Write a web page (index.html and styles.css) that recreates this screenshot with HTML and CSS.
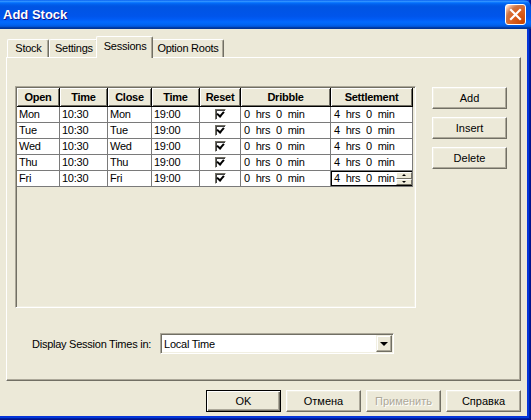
FILE: index.html
```html
<!DOCTYPE html>
<html lang="en">
<head>
    <meta charset="UTF-8">
    <title>Add Stock</title>
    <link rel="stylesheet" href="styles.css">
</head>
<body>
    <div class="window">
        <div class="titlebar">
            <span class="title">Add Stock</span>
            <button class="close-btn" aria-label="Close">
                <svg width="13" height="13" viewBox="0 0 13 13"><path d="M2 2 L11 11 M11 2 L2 11" stroke="#fff" stroke-width="2.2" stroke-linecap="square"/></svg>
            </button>
        </div>
        <div class="client">
            <div class="tabs">
                <div class="tab">Stock</div>
                <div class="tab">Settings</div>
                <div class="tab active">Sessions</div>
                <div class="tab">Option Roots</div>
            </div>
            <div class="panel">
                <div class="grid-area">
                    <div class="grid-frame">
                        <table class="grid">
                            <colgroup>
                                <col class="c-open"><col class="c-time"><col class="c-close"><col class="c-time">
                                <col class="c-reset"><col class="c-dribble"><col class="c-settle">
                            </colgroup>
                            <thead>
                                <tr><th>Open</th><th>Time</th><th>Close</th><th>Time</th><th>Reset</th><th>Dribble</th><th>Settlement</th></tr>
                            </thead>
                            <tbody>
                                <tr><td>Mon</td><td>10:30</td><td>Mon</td><td>19:00</td><td class="reset"><span class="check"></span></td><td class="dur">0 hrs 0 min</td><td class="dur">4 hrs 0 min</td></tr>
                                <tr><td>Tue</td><td>10:30</td><td>Tue</td><td>19:00</td><td class="reset"><span class="check"></span></td><td class="dur">0 hrs 0 min</td><td class="dur">4 hrs 0 min</td></tr>
                                <tr><td>Wed</td><td>10:30</td><td>Wed</td><td>19:00</td><td class="reset"><span class="check"></span></td><td class="dur">0 hrs 0 min</td><td class="dur">4 hrs 0 min</td></tr>
                                <tr><td>Thu</td><td>10:30</td><td>Thu</td><td>19:00</td><td class="reset"><span class="check"></span></td><td class="dur">0 hrs 0 min</td><td class="dur">4 hrs 0 min</td></tr>
                                <tr><td>Fri</td><td>10:30</td><td>Fri</td><td>19:00</td><td class="reset"><span class="check"></span></td><td class="dur">0 hrs 0 min</td>
                                    <td class="dur editing">
                                        <div class="edit">
                                            <span class="edit-text">4 hrs 0 min</span>
                                            <span class="spin"><span class="spin-up"></span><span class="spin-down"></span></span>
                                        </div>
                                    </td></tr>
                            </tbody>
                        </table>
                    </div>
                    <div class="side-buttons">
                        <button class="btn">Add</button>
                        <button class="btn">Insert</button>
                        <button class="btn">Delete</button>
                    </div>
                </div>
                <div class="display-row">
                    <label>Display Session Times in:</label>
                    <div class="combo">
                        <span class="combo-text">Local Time</span>
                        <span class="combo-btn"></span>
                    </div>
                </div>
            </div>
            <div class="dialog-buttons">
                <button class="btn default">OK</button>
                <button class="btn">Отмена</button>
                <button class="btn" disabled>Применить</button>
                <button class="btn">Справка</button>
            </div>
        </div>
    </div>
</body>
</html>
```

FILE: styles.css
```css
body {
    margin: 0;
    background: #fff;
    font-family: "Liberation Sans", Arial, sans-serif;
    font-size: 11px;
    letter-spacing: -0.25px;
    color: #000;
}
.window {
    width: 531px;
    height: 420px;
    display: flex;
    flex-direction: column;
    background: #0831d9;
    box-shadow: inset -1px -1px #00138c, inset -2px -2px #001ea0, inset -3px -3px #003bda;
}

/* title bar */
.titlebar {
    flex: none;
    height: 29px;
    display: flex;
    align-items: center;
    justify-content: space-between;
    padding: 0 5px 0 3px;
    border-top-right-radius: 7px;
    background: linear-gradient(to bottom, #0058ee 0%, #3593ff 4%, #288eff 6%, #127dff 8%, #036ffc 10%, #0262ee 14%, #0057e5 20%, #0054e3 24%, #0055eb 56%, #005bf5 66%, #026afe 76%, #0062ef 86%, #0052d6 92%, #0040ab 94%, #003092 100%);
}
.title {
    color: #fff;
    font-weight: bold;
    font-size: 13px;
    letter-spacing: 0;
    text-shadow: 1px 1px #0f1089;
}
.close-btn {
    width: 21px;
    height: 21px;
    padding: 0;
    display: flex;
    align-items: center;
    justify-content: center;
    border: 1px solid #fff;
    border-radius: 3px;
    background: radial-gradient(circle at 90% 90%, #cc4600 0%, #dc6527 55%, #cd7546 70%, #ffccb2 90%, #fff 100%);
}

/* dialog body */
.client {
    flex: 1;
    margin: 0 4px 4px 0;
    padding: 7px 6px 0 6px;
    background: #ece9d8;
    display: flex;
    flex-direction: column;
}
.tabs {
    display: flex;
    height: 21px;
    padding-left: 1px;
}
.tab {
    box-sizing: border-box;
    min-width: 42px;
    margin-top: 3px;
    height: 18px;
    line-height: 17px;
    padding: 0 4px 0 5px;
    text-align: center;
    border: 1px solid #fff;
    border-right-color: #716f64;
    border-bottom: none;
    border-radius: 2px 2px 0 0;
    box-shadow: inset -1px 0 #aca899;
}
.tab.active {
    position: relative;
    z-index: 1;
    margin: 0 -2px;
    height: 22px;
    line-height: 19px;
    padding: 0 6px 0 7px;
    background: #ece9d8;
}
.panel {
    box-sizing: border-box;
    height: 324px;
    border: 1px solid;
    border-color: #fff #716f64 #716f64 #fff;
    box-shadow: inset -1px -1px #aca899;
    padding: 28px 0 0 8px;
}
.grid-area {
    display: flex;
    align-items: flex-start;
    gap: 16px;
}
.grid-frame {
    box-sizing: border-box;
    width: 401px;
    height: 222px;
    padding: 1px;
    border: 1px solid;
    border-color: #aca899 #fff #fff #aca899;
    box-shadow: inset 1px 1px #716f64, inset -1px -1px #f1efe2;
}

/* sessions grid */
.grid {
    border-collapse: separate;
    border-spacing: 0;
    table-layout: fixed;
    width: 396px;
}
.c-open { width: 43px; }
.c-time { width: 48px; }
.c-close { width: 44px; }
.c-reset { width: 41px; }
.c-dribble { width: 90px; }
.c-settle { width: 82px; }
.grid th {
    padding: 0;
    line-height: 18px;
    font-weight: bold;
    text-align: center;
    background: #ece9d8;
    border-right: 1px solid #000;
    border-bottom: 1px solid #000;
    box-shadow: inset 1px 1px #fff, inset -1px -1px #716f64;
}
.grid td {
    padding: 0 2px;
    line-height: 15px;
    background: #fff;
    border-right: 1px solid #7a7a7a;
    border-bottom: 1px solid #7a7a7a;
    white-space: nowrap;
    overflow: hidden;
}
.grid td.reset {
    text-align: center;
}
.grid td.dur {
    padding-left: 3px;
    word-spacing: 3px;
}
.check {
    display: inline-block;
    box-sizing: border-box;
    width: 11px;
    height: 11px;
    vertical-align: -2px;
    border: 1px solid;
    border-color: #716f64 #fff #fff #716f64;
    box-shadow: inset 1px 1px #404040;
    background: #fff;
    position: relative;
}
.check::after {
    content: "";
    position: absolute;
    left: 2px;
    top: 0;
    width: 3px;
    height: 5px;
    border: solid #000;
    border-width: 0 2px 2px 0;
    transform: rotate(40deg);
}
.grid td.editing {
    padding: 0;
}
.edit {
    display: flex;
    height: 15px;
    box-sizing: border-box;
    border: 1px solid #000;
    border-right: none;
}
.edit-text {
    flex: 1;
    padding-left: 2px;
    line-height: 13px;
}
.spin {
    width: 16px;
    display: flex;
    flex-direction: column;
}
.spin span {
    flex: 1;
    display: flex;
    align-items: center;
    justify-content: center;
    background: #ece9d8;
    border: 1px solid;
    border-color: #fff #716f64 #716f64 #fff;
}
.spin-up::before,
.spin-down::before {
    content: "";
    border-left: 2px solid transparent;
    border-right: 2px solid transparent;
}
.spin-up::before { border-bottom: 2px solid #000; }
.spin-down::before { border-top: 2px solid #000; }

/* buttons */
.btn {
    box-sizing: border-box;
    width: 75px;
    height: 22px;
    padding: 0;
    font: inherit;
    color: #000;
    background: #ece9d8;
    border: 1px solid;
    border-color: #fff #716f64 #716f64 #fff;
    box-shadow: inset -1px -1px #aca899, inset 1px 1px #f1efe2;
}
.btn.default {
    border-color: #000;
    box-shadow: inset 1px 1px #fff, inset -1px -1px #716f64, inset -2px -2px #aca899;
}
.btn:disabled {
    color: #aca899;
    text-shadow: 1px 1px #fff;
}
.side-buttons {
    display: flex;
    flex-direction: column;
    gap: 8px;
    padding-top: 1px;
}
.display-row {
    display: flex;
    align-items: center;
    gap: 9px;
    margin-top: 25px;
    padding-left: 17px;
}
.combo {
    box-sizing: border-box;
    width: 234px;
    height: 21px;
    display: flex;
    align-items: center;
    justify-content: space-between;
    padding: 1px;
    background: #fff;
    border: 1px solid;
    border-color: #aca899 #fff #fff #aca899;
    box-shadow: inset 1px 1px #716f64, inset -1px -1px #f1efe2;
}
.combo-text {
    padding-left: 2px;
}
.combo-btn {
    box-sizing: border-box;
    width: 16px;
    height: 17px;
    display: flex;
    align-items: center;
    justify-content: center;
    background: #ece9d8;
    border: 1px solid;
    border-color: #f1efe2 #716f64 #716f64 #f1efe2;
    box-shadow: inset -1px -1px #aca899, inset 1px 1px #fff;
}
.combo-btn::before {
    content: "";
    border-left: 4px solid transparent;
    border-right: 4px solid transparent;
    border-top: 4px solid #000;
}
.dialog-buttons {
    display: flex;
    justify-content: flex-end;
    gap: 5px;
    margin-top: 9px;
}
```
